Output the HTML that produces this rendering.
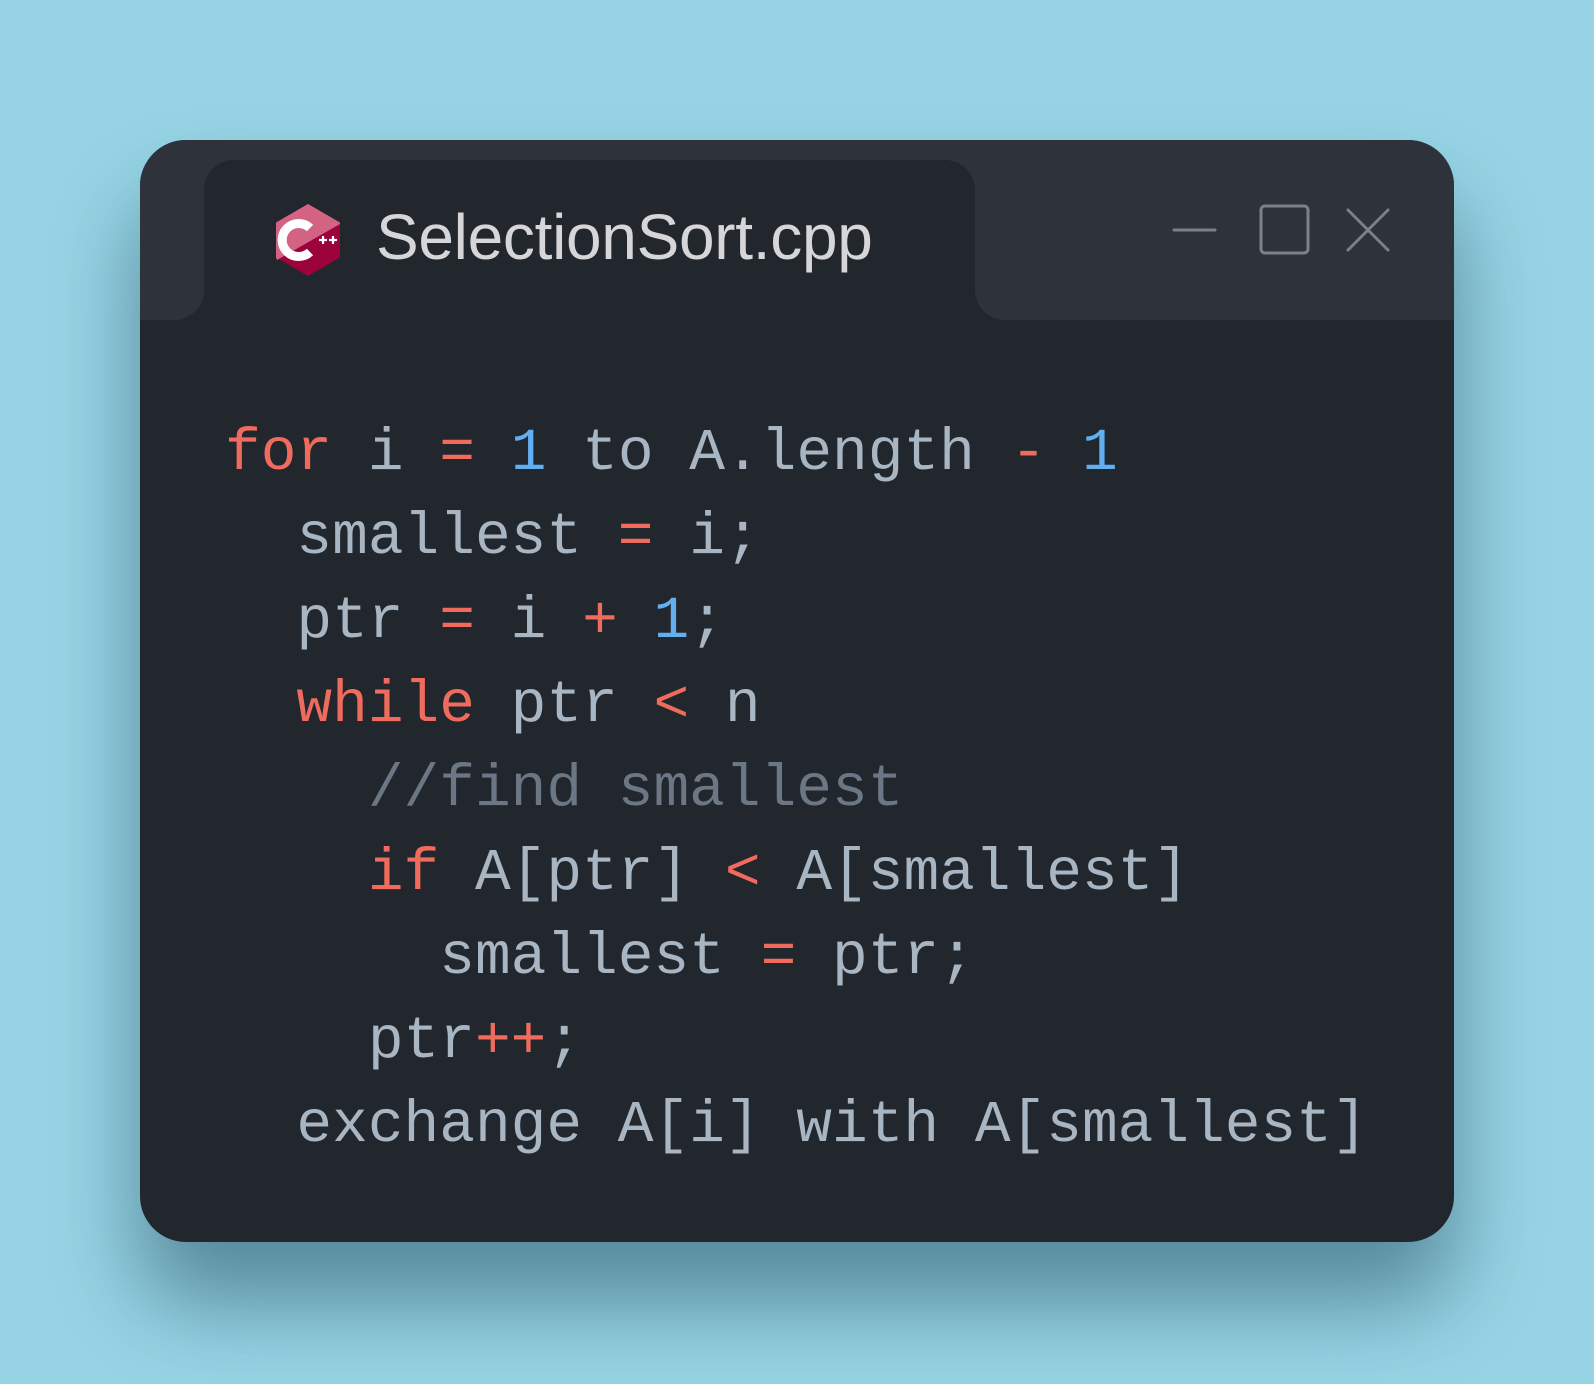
<!DOCTYPE html>
<html><head><meta charset="utf-8"><style>
html,body{margin:0;padding:0;}
body{width:1594px;height:1384px;background:#97d5e6;position:relative;overflow:hidden;}
.win{position:absolute;left:140px;top:140px;width:1314px;height:1102px;border-radius:46px;background:#22262d;overflow:hidden;box-shadow:0 60px 90px rgba(20,60,80,0.5);}
.hl{position:absolute;left:0;top:0;width:64px;height:180px;background:#2e323a;border-bottom-right-radius:30px;}
.hr{position:absolute;left:835px;top:0;width:479px;height:180px;background:#2e323a;border-bottom-left-radius:30px;}
.ht{position:absolute;left:0;top:0;width:100%;height:60px;background:#2e323a;}
.tab{position:absolute;left:64px;top:20px;width:771px;height:180px;background:#22262d;border-radius:30px 30px 0 0;}
.title{position:absolute;font:64px "Liberation Sans",Arial,sans-serif;color:#d6d6d8;letter-spacing:-0.3px;line-height:1;}
pre{position:absolute;left:85px;top:0;margin:0;font:59.5px/84px "Liberation Mono",monospace;color:#a8b5c3;}
.r{color:#ef6b5e}.b{color:#61aff0}.c{color:#6b7785}
</style></head><body>
<div class="win">
<div class="ht"></div>
<div class="hl"></div>
<div class="hr"></div>
<div class="tab"></div>
<svg style="position:absolute;left:0;top:0" width="1314" height="200">
<polygon points="168,64 200,82.5 200,117.5 168,136 136,117.5 136,82.5" fill="#9c033a"/>
<polygon points="168,64 200,82.5 200,84 137,120 136,117.5 136,82.5" fill="#d26383"/>
<path d="M170,88 A16.5,16.5 0 1 0 170,112" fill="none" stroke="#fff" stroke-width="9"/>
<path d="M179,100h8M183,96v8M189,100h8M193,96v8" stroke="#fff" stroke-width="2.2"/>
<g stroke="#7d8086" stroke-width="3" fill="none" stroke-linecap="round">
<line x1="1034" y1="90" x2="1075" y2="90"/>
<rect x="1121" y="66" width="47" height="47" rx="4"/>
<line x1="1208" y1="70" x2="1248" y2="110"/><line x1="1248" y1="70" x2="1208" y2="110"/>
</g>
</svg>
<div class="title" style="left:236px;top:65px">SelectionSort.cpp</div>
<pre style="top:271px"><span class="r">for</span> i <span class="r">=</span> <span class="b">1</span> to A.length <span class="r">-</span> <span class="b">1</span>
  smallest <span class="r">=</span> i;
  ptr <span class="r">=</span> i <span class="r">+</span> <span class="b">1</span>;
  <span class="r">while</span> ptr <span class="r">&lt;</span> n
    <span class="c">//find smallest</span>
    <span class="r">if</span> A[ptr] <span class="r">&lt;</span> A[smallest]
      smallest <span class="r">=</span> ptr;
    ptr<span class="r">++</span>;
  exchange A[i] with A[smallest]</pre>
</div>
</body></html>
